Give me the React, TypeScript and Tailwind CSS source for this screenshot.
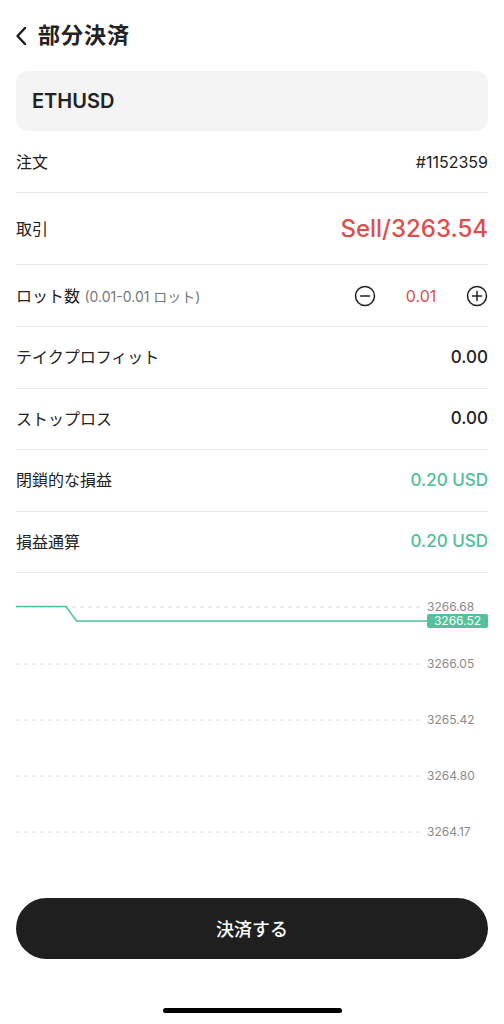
import React from "react";

const font = { fontFamily: '"Inter", "Noto Sans CJK JP", sans-serif' };

const rows = [
  { label: "テイクプロフィット", value: "0.00", tone: "text-[#222222]" },
  { label: "ストップロス", value: "0.00", tone: "text-[#222222]" },
  { label: "閉鎖的な損益", value: "0.20 USD", tone: "text-[#4fbf98]" },
  { label: "損益通算", value: "0.20 USD", tone: "text-[#4fbf98]" },
];

const grid = [
  { y: 34, label: "3266.68" },
  { y: 91, label: "3266.05" },
  { y: 147, label: "3265.42" },
  { y: 203, label: "3264.80" },
  { y: 259, label: "3264.17" },
];

function CircleIcon({ plus }: { plus?: boolean }) {
  return (
    <svg width="22" height="22" viewBox="0 0 22 22" fill="none" stroke="#222" strokeWidth="1.5" strokeLinecap="round">
      <circle cx="11" cy="11" r="9.5" />
      <path d="M6.5 11h9" />
      {plus && <path d="M11 6.5v9" />}
    </svg>
  );
}

export default function App() {
  return (
    <div className="w-[504px] h-[1024px] bg-white flex flex-col text-[#222222]" style={font}>
      {/* Header */}
      <div className="h-[71px] flex items-center px-[14px] gap-[8px]">
        <svg width="16" height="20" viewBox="0 0 16 20" fill="none" stroke="#1a1a1a" strokeWidth="2.4" strokeLinecap="round" strokeLinejoin="round">
          <path d="M11 2 L3.5 10 L11 18" />
        </svg>
        <h1 className="text-[22px] font-bold tracking-[1px]">部分決済</h1>
      </div>

      {/* Symbol */}
      <div className="mx-4 h-[60px] rounded-xl bg-[#f4f4f4] flex items-center px-4">
        <span className="text-[20px] font-semibold">ETHUSD</span>
      </div>

      {/* Rows */}
      <div className="px-4">
        <div className="h-[62px] border-b border-[#e8e8e8] flex items-center justify-between">
          <span className="text-[16px]">注文</span>
          <span className="text-[16px]">#1152359</span>
        </div>
        <div className="h-[72px] border-b border-[#e8e8e8] flex items-center justify-between">
          <span className="text-[16px]">取引</span>
          <span className="text-[24px] font-medium text-[#dc4f4a]">Sell/3263.54</span>
        </div>
        <div className="h-[62px] border-b border-[#e8e8e8] flex items-center justify-between">
          <span className="text-[16px]">
            ロット数 <span className="text-[14px] text-[#777777]">(0.01-0.01 ロット)</span>
          </span>
          <div className="flex items-center">
            <CircleIcon />
            <span className="w-[90px] text-center text-[16px] text-[#dc4f4a]">0.01</span>
            <CircleIcon plus />
          </div>
        </div>
        {rows.map((r) => (
          <div key={r.label} className="h-[61.5px] border-b border-[#e8e8e8] flex items-center justify-between">
            <span className="text-[16px]">{r.label}</span>
            <span className={`text-[17px] font-medium ${r.tone}`}>{r.value}</span>
          </div>
        ))}
      </div>

      {/* Chart */}
      <div className="h-[325px]">
        <svg width="504" height="325" viewBox="0 0 504 325">
          {grid.map((g) => (
            <g key={g.label}>
              <line x1="16" x2="424" y1={g.y} y2={g.y} stroke="#dcdcdc" strokeWidth="1" strokeDasharray="4 4" />
              <text x="427" y={g.y + 4} fontSize="12" fill="#8a8a8a" style={font}>{g.label}</text>
            </g>
          ))}
          <path d="M16 33.5 H66 L76.5 48 H427" fill="none" stroke="#52c29c" strokeWidth="1.5" />
          <rect x="427" y="41" width="61" height="14" rx="2" fill="#52c29c" />
          <text x="457.5" y="52" fontSize="12" fill="#ffffff" textAnchor="middle" style={font}>3266.52</text>
        </svg>
      </div>

      {/* Button */}
      <div className="px-4">
        <button className="w-full h-[61px] rounded-full bg-[#1f1f1f] text-white text-[18px] font-medium pt-[2px]">
          決済する
        </button>
      </div>

      {/* Home indicator */}
      <div className="flex-1 flex items-end justify-center pb-[11px]">
        <div className="w-[179px] h-[5px] rounded-full bg-black" />
      </div>
    </div>
  );
}
